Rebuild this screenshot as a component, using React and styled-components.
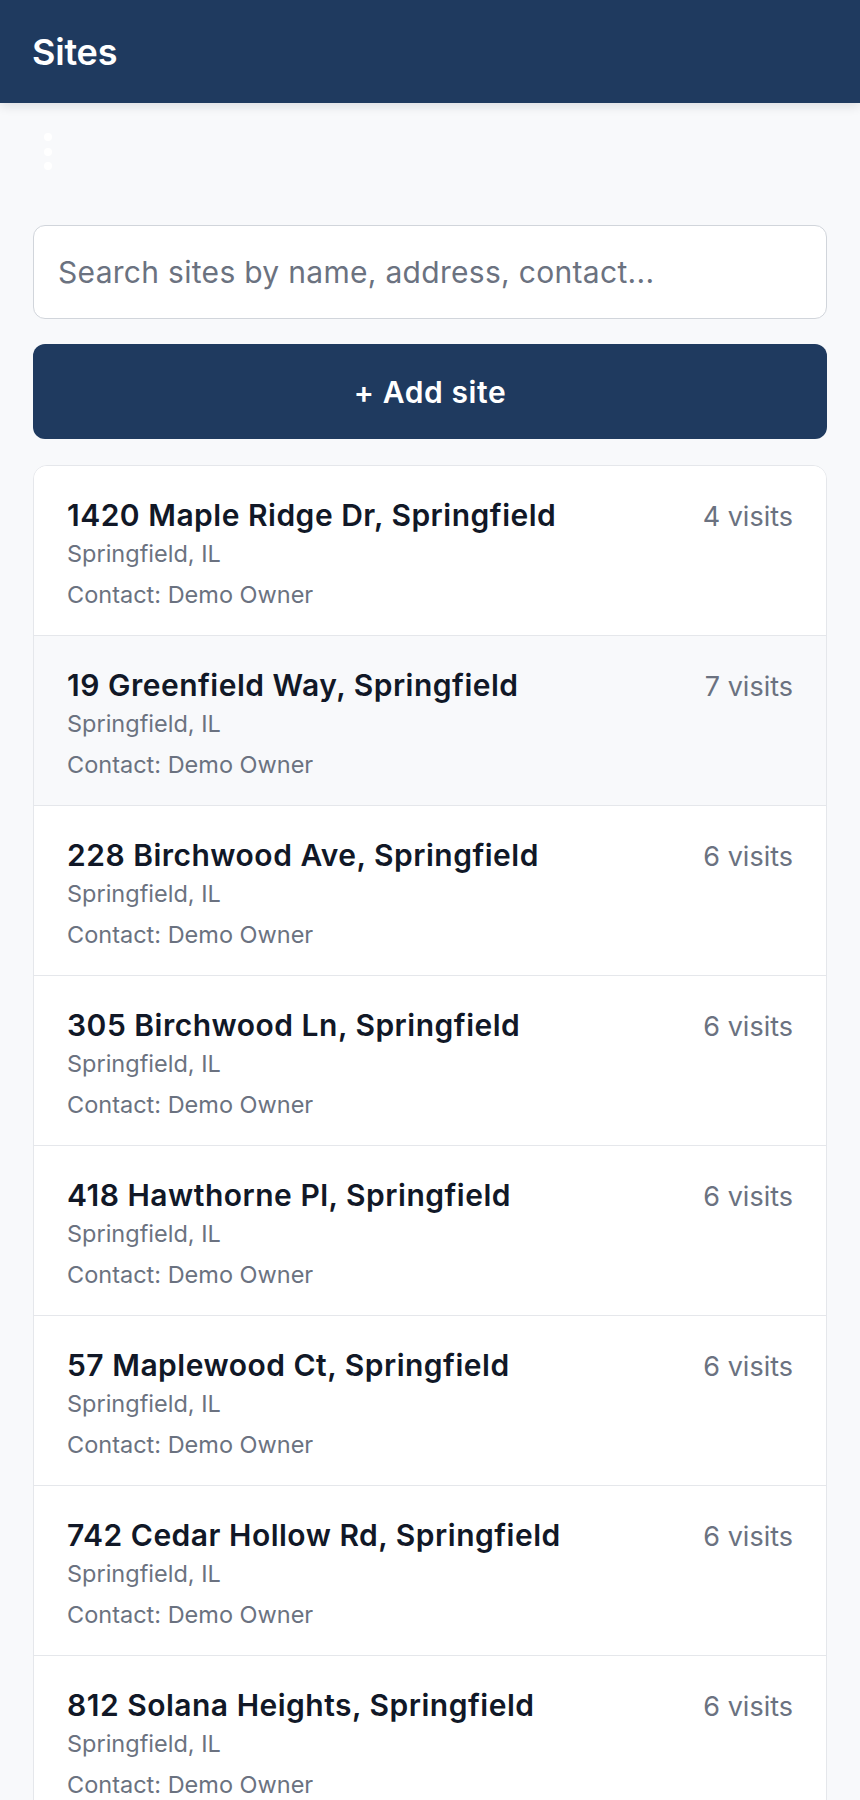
import React from "react";
import styled, { createGlobalStyle } from "styled-components";

const sites = [
  { name: "1420 Maple Ridge Dr, Springfield", visits: 4 },
  { name: "19 Greenfield Way, Springfield", visits: 7, active: true },
  { name: "228 Birchwood Ave, Springfield", visits: 6 },
  { name: "305 Birchwood Ln, Springfield", visits: 6 },
  { name: "418 Hawthorne Pl, Springfield", visits: 6 },
  { name: "57 Maplewood Ct, Springfield", visits: 6 },
  { name: "742 Cedar Hollow Rd, Springfield", visits: 6 },
  { name: "812 Solana Heights, Springfield", visits: 6 },
];

const App = () => {
  return (
    <>
      <GlobalStyle />
      <Header>
        <Title>Sites</Title>
      </Header>

      <Main>
        <MenuButton aria-label="More">
          <svg width="8" height="38" viewBox="0 0 8 38">
            <circle cx="4" cy="4" r="4" fill="#fff" />
            <circle cx="4" cy="19" r="4" fill="#fff" />
            <circle cx="4" cy="33" r="4" fill="#fff" />
          </svg>
        </MenuButton>

        <SearchInput placeholder="Search sites by name, address, contact..." />

        <AddButton>+ Add site</AddButton>

        <SiteList>
          {sites.map((site, i) => (
            <SiteRow key={i} $active={site.active}>
              <SiteInfo>
                <SiteName>{site.name}</SiteName>
                <SiteMeta $gap={5}>Springfield, IL</SiteMeta>
                <SiteMeta $gap={9}>Contact: Demo Owner</SiteMeta>
              </SiteInfo>
              <Visits>{site.visits} visits</Visits>
            </SiteRow>
          ))}
        </SiteList>
      </Main>
    </>
  );
};

export default App;

/* ---------------- Styled Components ---------------- */

const GlobalStyle = createGlobalStyle`
  html {
    scrollbar-width: none;
  }
  html::-webkit-scrollbar {
    display: none;
  }
  body {
    margin: 0;
    background: #f8f9fb;
    font-family: Inter, "Noto Sans", sans-serif;
    -webkit-font-smoothing: antialiased;
  }
  * {
    box-sizing: border-box;
  }
`;

const Header = styled.header`
  height: 103px;
  background: #1f3a5f;
  display: flex;
  align-items: center;
  padding: 0 32px;
  box-shadow: 0 3px 10px rgba(15, 23, 42, 0.12);
  position: relative;
  z-index: 1;
`;

const Title = styled.h1`
  margin: 0;
  color: #fff;
  font-size: 36px;
  font-weight: 600;
  letter-spacing: -0.2px;
`;

const Main = styled.main`
  padding: 0 33px;
  display: flex;
  flex-direction: column;
`;

const MenuButton = styled.button`
  align-self: flex-start;
  background: none;
  border: none;
  padding: 0;
  margin: 30px 0 0 11px;
  height: 38px;
  display: flex;
  cursor: pointer;
`;

const SearchInput = styled.input`
  margin-top: 54px;
  height: 94px;
  width: 100%;
  border: 1.5px solid #d1d5db;
  border-radius: 12px;
  background: #fff;
  padding: 0 24px;
  font-family: inherit;
  font-size: 30px;
  letter-spacing: 0.3px;
  color: #111827;
  outline: none;

  &::placeholder {
    color: #6b7280;
  }
`;

const AddButton = styled.button`
  margin-top: 25px;
  height: 95px;
  width: 100%;
  border: none;
  border-radius: 12px;
  background: #1f3a5f;
  color: #fff;
  font-family: inherit;
  font-size: 30px;
  font-weight: 600;
  letter-spacing: 0.6px;
  cursor: pointer;
`;

const SiteList = styled.div`
  margin-top: 26px;
  background: #fff;
  border: 1px solid #e5e7eb;
  border-radius: 14px;
  overflow: hidden;
`;

const SiteRow = styled.div`
  display: flex;
  align-items: baseline;
  justify-content: space-between;
  gap: 20px;
  padding: 31px 33px 24px;
  border-bottom: 1.5px solid #e5e7eb;
  background: ${(p) => (p.$active ? "#f8f9fb" : "#fff")};
`;

const SiteInfo = styled.div`
  display: flex;
  flex-direction: column;
  min-width: 0;
`;

const SiteName = styled.div`
  font-size: 30px;
  line-height: 36px;
  font-weight: 600;
  letter-spacing: 0.5px;
  color: #111827;
`;

const SiteMeta = styled.div`
  margin-top: ${(p) => p.$gap}px;
  font-size: 23.5px;
  line-height: 32px;
  color: #6b7280;
`;

const Visits = styled.span`
  font-size: 27px;
  color: #6b7280;
  white-space: nowrap;
`;
